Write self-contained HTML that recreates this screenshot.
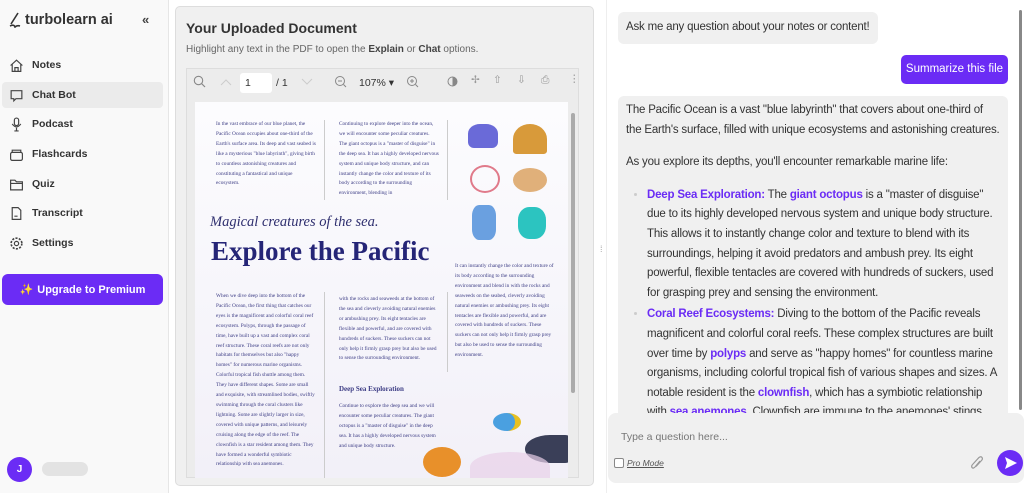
<!DOCTYPE html>
<html><head><meta charset="utf-8"><style>
*{box-sizing:border-box;margin:0;padding:0}
body{width:1024px;height:493px;overflow:hidden;background:#fff;font-family:"Liberation Sans",sans-serif;position:relative;color:#222}
.abs{position:absolute}
.side{left:0;top:0;width:168px;height:493px;background:#f9f9f9}
.nav{position:absolute;left:2px;width:161px;height:26px;font-size:10.5px;font-weight:bold;color:#333;display:flex;align-items:center;padding-left:7px;border-radius:4px}
.nav svg{margin-right:8px}
.mid{left:175px;top:6px;width:419px;height:480px;background:#f0f0f0;border:1px solid #ddd;border-radius:5px}
.pt{font-family:"Liberation Serif",serif;font-size:5.3px;line-height:9.9px;color:#3d3d85;position:absolute}
.chat{font-size:11.5px;line-height:19.6px;color:#333;letter-spacing:-0.2px}
.pu{color:#6b2cf5;font-weight:bold}
</style></head><body>
<div class="abs side">
 <div class="abs" style="left:8px;top:12px;font-size:14.5px;font-weight:bold;color:#333;display:flex;align-items:center">
  <svg width="14" height="16" viewBox="0 0 14 16"><path d="M10 1 L3 12 M2 14 Q6 12 7 15 Q9 13 12 14" stroke="#333" stroke-width="1.6" fill="none"/></svg>
  <span style="margin-left:3px">turbolearn ai</span></div>
 <div class="abs" style="left:142px;top:12px;font-size:13px;color:#444;font-weight:bold">«</div>
 <div class="nav" style="top:52px"><svg width="15" height="15" viewBox="0 0 14 14"><path d="M1.5 7 L7 2 L12.5 7 M3 6 V12.5 H11 V6 M5.5 12.5 V9 H8.5 V12.5" stroke="#444" stroke-width="1.1" fill="none"/></svg>Notes</div>
 <div class="nav" style="top:82px;background:#ebebeb"><svg width="15" height="15" viewBox="0 0 14 14"><path d="M2 2.5 H12 V10 H6.5 L4.5 12 V10 H2 Z" stroke="#444" stroke-width="1.1" fill="none"/></svg>Chat Bot</div>
 <div class="nav" style="top:111px"><svg width="15" height="15" viewBox="0 0 14 14"><rect x="5" y="1" width="4" height="7" rx="2" stroke="#444" stroke-width="1.1" fill="none"/><path d="M3 6.5 Q7 12 11 6.5 M7 10 V13 M5 13 H9" stroke="#444" stroke-width="1.1" fill="none"/></svg>Podcast</div>
 <div class="nav" style="top:141px"><svg width="15" height="15" viewBox="0 0 14 14"><rect x="1.5" y="5" width="11" height="7.5" rx="1.5" stroke="#444" stroke-width="1.1" fill="none"/><path d="M3 5 V3 H11 V5" stroke="#444" stroke-width="1.1" fill="none"/></svg>Flashcards</div>
 <div class="nav" style="top:171px"><svg width="15" height="15" viewBox="0 0 14 14"><path d="M1.5 3 H5.5 L7 4.5 H12.5 V12 H1.5 Z M1.5 6 H12.5" stroke="#444" stroke-width="1.1" fill="none"/></svg>Quiz</div>
 <div class="nav" style="top:200px"><svg width="15" height="15" viewBox="0 0 14 14"><path d="M3 1.5 H8.5 L11 4 V12.5 H3 Z M5 9.5 H8" stroke="#444" stroke-width="1.1" fill="none"/></svg>Transcript</div>
 <div class="nav" style="top:230px"><svg width="15" height="15" viewBox="0 0 14 14"><circle cx="7" cy="7" r="2" stroke="#444" stroke-width="1.1" fill="none"/><circle cx="7" cy="7" r="5" stroke="#444" stroke-width="1.5" stroke-dasharray="2 1.2" fill="none"/></svg>Settings</div>
 <div class="abs" style="left:2px;top:274px;width:161px;height:31px;background:#6b2cf5;border-radius:6px;color:#fff;font-size:11px;font-weight:bold;display:flex;align-items:center;justify-content:center"><span style="color:#f7c948;margin-right:4px">✨</span>Upgrade to Premium</div>
 <div class="abs" style="left:7px;top:457px;width:25px;height:25px;border-radius:50%;background:#6b2cf5;color:#fff;font-size:10px;font-weight:bold;text-align:center;line-height:25px">J</div>
 <div class="abs" style="left:42px;top:462px;width:46px;height:14px;border-radius:7px;background:#e3e3e3"></div>
</div>
<div class="abs" style="left:168px;top:0;width:1px;height:493px;background:#e6e6e6"></div>
<div class="abs mid">
 <div class="abs" style="left:10px;top:13px;font-size:14px;font-weight:bold;color:#333">Your Uploaded Document</div>
 <div class="abs" style="left:10px;top:37px;font-size:10px;color:#666">Highlight any text in the PDF to open the <b style="color:#444">Explain</b> or <b style="color:#444">Chat</b> options.</div>
 <div class="abs" style="left:10px;top:61px;width:393px;height:410px;background:#ececec;border:1px solid #ddd">
  <div class="abs" style="left:0;top:0;width:391px;height:27px;font-size:10.5px;color:#999">
   <svg class="abs" style="left:6px;top:6px" width="13" height="13" viewBox="0 0 13 13"><circle cx="5.5" cy="5.5" r="4.2" stroke="#888" stroke-width="1.1" fill="none"/><path d="M8.5 8.5 L12 12" stroke="#888" stroke-width="1.2"/></svg>
   <svg class="abs" style="left:33px;top:9px" width="12" height="8"><path d="M1 7 L6 2 L11 7" stroke="#ccc" fill="none"/></svg>
   <div class="abs" style="left:53px;top:4px;width:32px;height:20px;background:#fff;border-radius:3px;color:#333;padding:4px 5px">1</div>
   <span class="abs" style="left:89px;top:8px;color:#333">/ 1</span>
   <svg class="abs" style="left:114px;top:9px" width="12" height="8"><path d="M1 1 L6 6 L11 1" stroke="#ccc" fill="none"/></svg>
   <svg class="abs" style="left:147px;top:6px" width="13" height="13"><circle cx="6" cy="6" r="4.5" stroke="#888" fill="none"/><path d="M4 6 H8 M9.5 9.5 L12 12" stroke="#888"/></svg>
   <span class="abs" style="left:172px;top:8px;color:#333">107% ▾</span>
   <svg class="abs" style="left:219px;top:6px" width="13" height="13"><circle cx="6" cy="6" r="4.5" stroke="#888" fill="none"/><path d="M4 6 H8 M6 4 V8 M9.5 9.5 L12 12" stroke="#888"/></svg>
   <svg class="abs" style="left:260px;top:7px" width="11" height="11"><circle cx="5.5" cy="5.5" r="4.5" stroke="#888" fill="none"/><path d="M5.5 1 A4.5 4.5 0 0 1 5.5 10 Z" fill="#888"/></svg>
   <span class="abs" style="left:284px;top:5px">✢</span>
   <span class="abs" style="left:306px;top:5px">⇧</span>
   <span class="abs" style="left:330px;top:5px">⇩</span>
   <span class="abs" style="left:354px;top:5px">⎙</span>
   <span class="abs" style="left:382px;top:4px">⋮</span>
  </div>
  <div class="abs" style="left:8px;top:33px;width:373px;height:376px;background:linear-gradient(180deg,#fcfcfe,#f2f0f8);overflow:hidden">
   <div class="pt" style="left:21px;top:18px;width:100px">In the vast embrace of our blue planet, the Pacific Ocean occupies about one-third of the Earth's surface area. Its deep and vast seabed is like a mysterious "blue labyrinth", giving birth to countless astonishing creatures and constituting a fantastical and unique ecosystem.</div>
   <div class="abs" style="left:129px;top:18px;width:1px;height:80px;background:#ccc"></div>
   <div class="pt" style="left:144px;top:18px;width:100px">Continuing to explore deeper into the ocean, we will encounter some peculiar creatures. The giant octopus is a "master of disguise" in the deep sea. It has a highly developed nervous system and unique body structure, and can instantly change the color and texture of its body according to the surrounding environment, blending in</div>
   <div class="abs" style="left:252px;top:18px;width:1px;height:80px;background:#ccc"></div>
   <div class="abs" style="left:273px;top:22px;width:30px;height:24px;background:#6a6ad8;border-radius:40% 40% 6px 6px"></div>
   <div class="abs" style="left:318px;top:22px;width:34px;height:30px;background:#d89a3a;border-radius:50% 50% 10% 10%"></div>
   <div class="abs" style="left:275px;top:63px;width:30px;height:28px;border:2px solid #e07a8a;border-radius:50%"></div>
   <div class="abs" style="left:318px;top:66px;width:34px;height:24px;background:#e0b07a;border-radius:50%"></div>
   <div class="abs" style="left:277px;top:103px;width:24px;height:35px;background:#6aa0e0;border-radius:30%"></div>
   <div class="abs" style="left:323px;top:105px;width:28px;height:32px;background:#2cc4c0;border-radius:40%"></div>
   <div class="abs" style="left:15px;top:112px;font-family:'Liberation Serif',serif;font-style:italic;font-size:14.5px;color:#2f2f6f">Magical creatures of the sea.</div>
   <div class="abs" style="left:16px;top:134px;font-family:'Liberation Serif',serif;font-weight:bold;font-size:27px;color:#252577">Explore the Pacific</div>
   <div class="pt" style="left:260px;top:160px;width:100px">It can instantly change the color and texture of its body according to the surrounding environment and blend in with the rocks and seaweeds on the seabed, cleverly avoiding natural enemies or ambushing prey. Its eight tentacles are flexible and powerful, and are covered with hundreds of suckers. These suckers can not only help it firmly grasp prey but also be used to sense the surrounding environment.</div>
   <div class="pt" style="left:21px;top:190px;width:100px">When we dive deep into the bottom of the Pacific Ocean, the first thing that catches our eyes is the magnificent and colorful coral reef ecosystem. Polyps, through the passage of time, have built up a vast and complex coral reef structure. These coral reefs are not only habitats for themselves but also "happy homes" for numerous marine organisms. Colorful tropical fish shuttle among them. They have different shapes. Some are small and exquisite, with streamlined bodies, swiftly swimming through the coral clusters like lightning. Some are slightly larger in size, covered with unique patterns, and leisurely cruising along the edge of the reef. The clownfish is a star resident among them. They have formed a wonderful symbiotic relationship with sea anemones.</div>
   <div class="abs" style="left:129px;top:190px;width:1px;height:190px;background:#ccc"></div>
   <div class="pt" style="left:144px;top:193px;width:100px">with the rocks and seaweeds at the bottom of the sea and cleverly avoiding natural enemies or ambushing prey. Its eight tentacles are flexible and powerful, and are covered with hundreds of suckers. These suckers can not only help it firmly grasp prey but also be used to sense the surrounding environment.</div>
   <div class="abs" style="left:252px;top:190px;width:1px;height:80px;background:#ccc"></div>
   <div class="abs" style="left:144px;top:283px;font-family:'Liberation Serif',serif;font-weight:bold;font-size:7px;color:#3d3d85">Deep Sea Exploration</div>
   <div class="pt" style="left:144px;top:300px;width:100px">Continue to explore the deep sea and we will encounter some peculiar creatures. The giant octopus is a "master of disguise" in the deep sea. It has a highly developed nervous system and unique body structure.</div>
   <div class="abs" style="left:298px;top:311px;width:28px;height:18px;background:#4aa0e0;border-radius:50%;border-right:6px solid #e8c020"></div>
   <div class="abs" style="left:330px;top:333px;width:50px;height:28px;background:#3a3f58;border-radius:50% 10px 10px 50%"></div>
   <div class="abs" style="left:228px;top:345px;width:38px;height:30px;background:#e8902a;border-radius:50%"></div>
   <div class="abs" style="left:275px;top:350px;width:80px;height:30px;background:#e8d0e8;border-radius:50% 50% 0 0;opacity:.7"></div>
  </div>
  <div class="abs" style="left:384px;top:44px;width:4px;height:280px;background:#aaa;border-radius:2px"></div>
 </div>
</div>
<div class="abs" style="left:600px;top:244px;font-size:9px;color:#aaa">⁞</div>
<div class="abs" style="left:606px;top:0;width:1px;height:493px;background:#eee"></div>
<div class="abs chat" style="left:618px;top:12px;height:32px;background:#f0f0f0;border-radius:6px;padding:6px 8px;white-space:nowrap">Ask me any question about your notes or content!</div>
<div class="abs" style="left:901px;top:55px;width:107px;height:29px;background:#6b2cf5;border-radius:5px;color:#fff;font-size:11.5px;line-height:29px;text-align:center">Summarize this file</div>
<div class="abs chat" style="left:618px;top:96px;width:390px;height:330px;background:#f0f0f0;border-radius:6px;padding:5px 8px;overflow:hidden">
 <p>The Pacific Ocean is a vast "blue labyrinth" that covers about one-third of the Earth's surface, filled with unique ecosystems and astonishing creatures.</p>
 <p style="margin-top:13px">As you explore its depths, you'll encounter remarkable marine life:</p>
 <ul style="margin-top:13px;padding-left:21px;color:#ccc">
  <li><span style="color:#333"><span class="pu">Deep Sea Exploration:</span> The <span class="pu">giant octopus</span> is a "master of disguise" due to its highly developed nervous system and unique body structure. This allows it to instantly change color and texture to blend with its surroundings, helping it avoid predators and ambush prey. Its eight powerful, flexible tentacles are covered with hundreds of suckers, used for grasping prey and sensing the environment.</span></li>
  <li style="margin-top:2px"><span style="color:#333"><span class="pu">Coral Reef Ecosystems:</span> Diving to the bottom of the Pacific reveals magnificent and colorful coral reefs. These complex structures are built over time by <span class="pu">polyps</span> and serve as "happy homes" for countless marine organisms, including colorful tropical fish of various shapes and sizes. A notable resident is the <span class="pu">clownfish</span>, which has a symbiotic relationship with <span class="pu">sea anemones</span>. Clownfish are immune to the anemones' stings due</span></li>
 </ul>
</div>
<div class="abs" style="left:1019px;top:10px;width:3px;height:400px;background:#888;border-radius:2px"></div>
<div class="abs" style="left:608px;top:413px;width:416px;height:70px;background:#f0f0f0;border-radius:8px">
 <div class="abs" style="left:13px;top:18px;font-size:10.5px;color:#777">Type a question here...</div>
 <div class="abs" style="left:6px;top:45px;width:10px;height:10px;border:1px solid #888;border-radius:2px;background:#fff"></div>
 <div class="abs" style="left:19px;top:45px;font-size:8.5px;color:#555;font-style:italic;text-decoration:underline">Pro Mode</div>
 <svg class="abs" style="left:362px;top:42px" width="14" height="16" viewBox="0 0 14 16"><path d="M10 6 L5 12 Q3 14 2 12.5 Q1 11 3 9 L9 2.5 Q11 1 12 2.5 Q13 4 11.5 5.5 L6 11.5" stroke="#999" stroke-width="1.2" fill="none"/></svg>
 <div class="abs" style="left:389px;top:37px;width:26px;height:26px;border-radius:50%;background:#6b2cf5"><svg width="26" height="26" viewBox="0 0 26 26"><path d="M8 7 L20 13 L8 19 L10 13 Z" fill="#fff"/></svg></div>
</div>
</body></html>
